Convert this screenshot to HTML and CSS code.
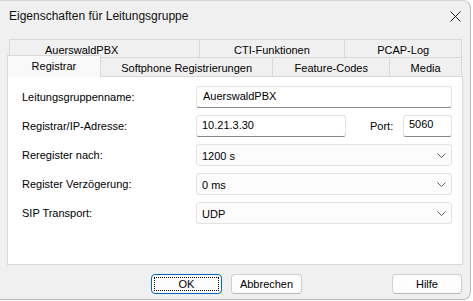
FILE: index.html
```html
<!DOCTYPE html>
<html>
<head>
<meta charset="utf-8">
<link rel="stylesheet" href="styles.css">
</head>
<body>
<div class="window">
  <div class="titlebar">
    <span class="title">Eigenschaften für Leitungsgruppe</span>
    <svg class="close" width="11" height="11" viewBox="0 0 11 11"><path d="M0.5 0.5 L10.5 10.5 M10.5 0.5 L0.5 10.5" stroke="#1a1a1a" stroke-width="1" fill="none"/></svg>
  </div>
  <div class="tabs">
    <div class="tabrow">
      <div class="tab w-auer">AuerswaldPBX</div>
      <div class="tab w-cti">CTI-Funktionen</div>
      <div class="tab w-pcap">PCAP-Log</div>
    </div>
    <div class="tabrow">
      <div class="tab sel w-reg">Registrar</div>
      <div class="tab w-soft">Softphone Registrierungen</div>
      <div class="tab w-feat">Feature-Codes</div>
      <div class="tab w-media">Media</div>
    </div>
  </div>
  <div class="panel">
    <div class="form">
      <div class="label">Leitungsgruppenname:</div>
      <div class="ctrl"><div class="input full">AuerswaldPBX</div></div>

      <div class="label">Registrar/IP-Adresse:</div>
      <div class="ctrl">
        <div class="input ip">10.21.3.30</div>
        <div class="portlabel">Port:</div>
        <div class="input port">5060</div>
      </div>

      <div class="label">Reregister nach:</div>
      <div class="ctrl"><div class="select">1200 s<svg class="chev" width="9" height="5" viewBox="0 0 9 5"><path d="M0.5 0.5 L4.5 4.5 L8.5 0.5" stroke="#606060" fill="none"/></svg></div></div>

      <div class="label">Register Verzögerung:</div>
      <div class="ctrl"><div class="select">0 ms<svg class="chev" width="9" height="5" viewBox="0 0 9 5"><path d="M0.5 0.5 L4.5 4.5 L8.5 0.5" stroke="#606060" fill="none"/></svg></div></div>

      <div class="label">SIP Transport:</div>
      <div class="ctrl"><div class="select">UDP<svg class="chev" width="9" height="5" viewBox="0 0 9 5"><path d="M0.5 0.5 L4.5 4.5 L8.5 0.5" stroke="#606060" fill="none"/></svg></div></div>
    </div>
  </div>
  <div class="buttons">
    <div class="btn default"><span class="focus">OK</span></div>
    <div class="btn">Abbrechen</div>
    <div class="btn help">Hilfe</div>
  </div>
</div>
</body>
</html>
```
FILE: styles.css
```css
* { box-sizing: border-box; }
html, body { margin: 0; padding: 0; background: #ffffff; }
body {
  font-family: "Liberation Sans", Arial, sans-serif;
  font-size: 11px;
  color: #000;
}
.window {
  width: 471px;
  height: 300px;
  background: #f0f0f0;
  border-top: 1px solid #d4d4d4;
  border-right: 1px solid #bcbcbc;
  border-bottom: 1px solid #bcbcbc;
  border-top-right-radius: 8px;
  border-bottom-right-radius: 8px;
  display: flex;
  flex-direction: column;
}
.titlebar {
  height: 31px;
  display: flex;
  align-items: center;
  justify-content: space-between;
  padding: 0 9px 1px 9px;
}
.title {
  font-size: 12px;
  color: #111;
}
.close { margin-right: 0px; }
.tabs {
  margin: 7px 8px 0 9px;
  display: flex;
  flex-direction: column;
}
.tabrow {
  display: flex;
  height: 18px;
}
.tabrow + .tabrow { height: 19px; }
.tab {
  background: #f0f0f0;
  border: 1px solid #d9d9d9;
  border-bottom: none;
  margin-left: -1px;
  display: flex;
  align-items: center;
  justify-content: center;
  padding-top: 2px;
  white-space: nowrap;
}
.tab:first-child { margin-left: 0; }
.w-auer { width: 191px; justify-content: flex-start; padding-left: 35px; }
.w-cti { width: 147px; }
.w-pcap { width: 118px; }
.tabrow + .tabrow .tab { padding-top: 1px; }
.tabrow + .tabrow .w-reg {
  width: 94px;
  margin-left: -2px;
  margin-top: -2px;
  height: 22px;
  position: relative;
  z-index: 2;
  background: #f9f9f9;
  padding-top: 0;
  padding-bottom: 1px;
}
.w-soft { width: 174px; }
.w-feat { width: 118px; }
.w-media { width: 73px; }
.panel {
  margin: 0 7px 0 7px;
  height: 189px;
  background: #ffffff;
  border: 1px solid #d9d9d9;
  padding: 9px 11px 0 14px;
  position: relative;
  z-index: 1;
}
.form {
  display: grid;
  grid-template-columns: 174px 1fr;
  grid-auto-rows: 22px;
  row-gap: 7px;
}
.label {
  display: flex;
  align-items: center;
}
.ctrl {
  display: flex;
  align-items: stretch;
}
.input {
  background: #fff;
  border: 1px solid #e3e3e3;
  border-bottom: 1px solid #878787;
  border-radius: 3px;
  padding: 0 6px 2px 6px;
  display: flex;
  align-items: center;
}
.full { flex: 1; }
.ip { width: 150px; padding-left: 5px; }
.portlabel {
  width: 57px;
  padding-left: 24px;
  display: flex;
  align-items: center;
}
.port { width: 49px; padding-left: 5px; padding-bottom: 4px; }
.select {
  flex: 1;
  background: #fcfcfc;
  border: 1px solid #e2e2e2;
  border-radius: 3px;
  padding: 1px 4px 0 5px;
  display: flex;
  align-items: center;
  justify-content: space-between;
}
.chev { margin-right: 1px; }
.buttons {
  display: flex;
  margin-top: 9px;
  padding: 0 8px 0 151px;
  gap: 9px;
}
.btn {
  width: 71px;
  height: 20px;
  background: #fdfdfd;
  border: 1px solid #d0d0d0;
  border-bottom-color: #b8b8b8;
  border-radius: 4px;
  display: flex;
  align-items: center;
  justify-content: center;
}
.btn.default {
  border: 1px solid #0067c0;
  padding: 2px;
}
.focus {
  width: 100%;
  height: 100%;
  border: 1px dotted #000;
  display: flex;
  align-items: center;
  justify-content: center;
}
.help { margin-left: auto; width: 70px; }
```
